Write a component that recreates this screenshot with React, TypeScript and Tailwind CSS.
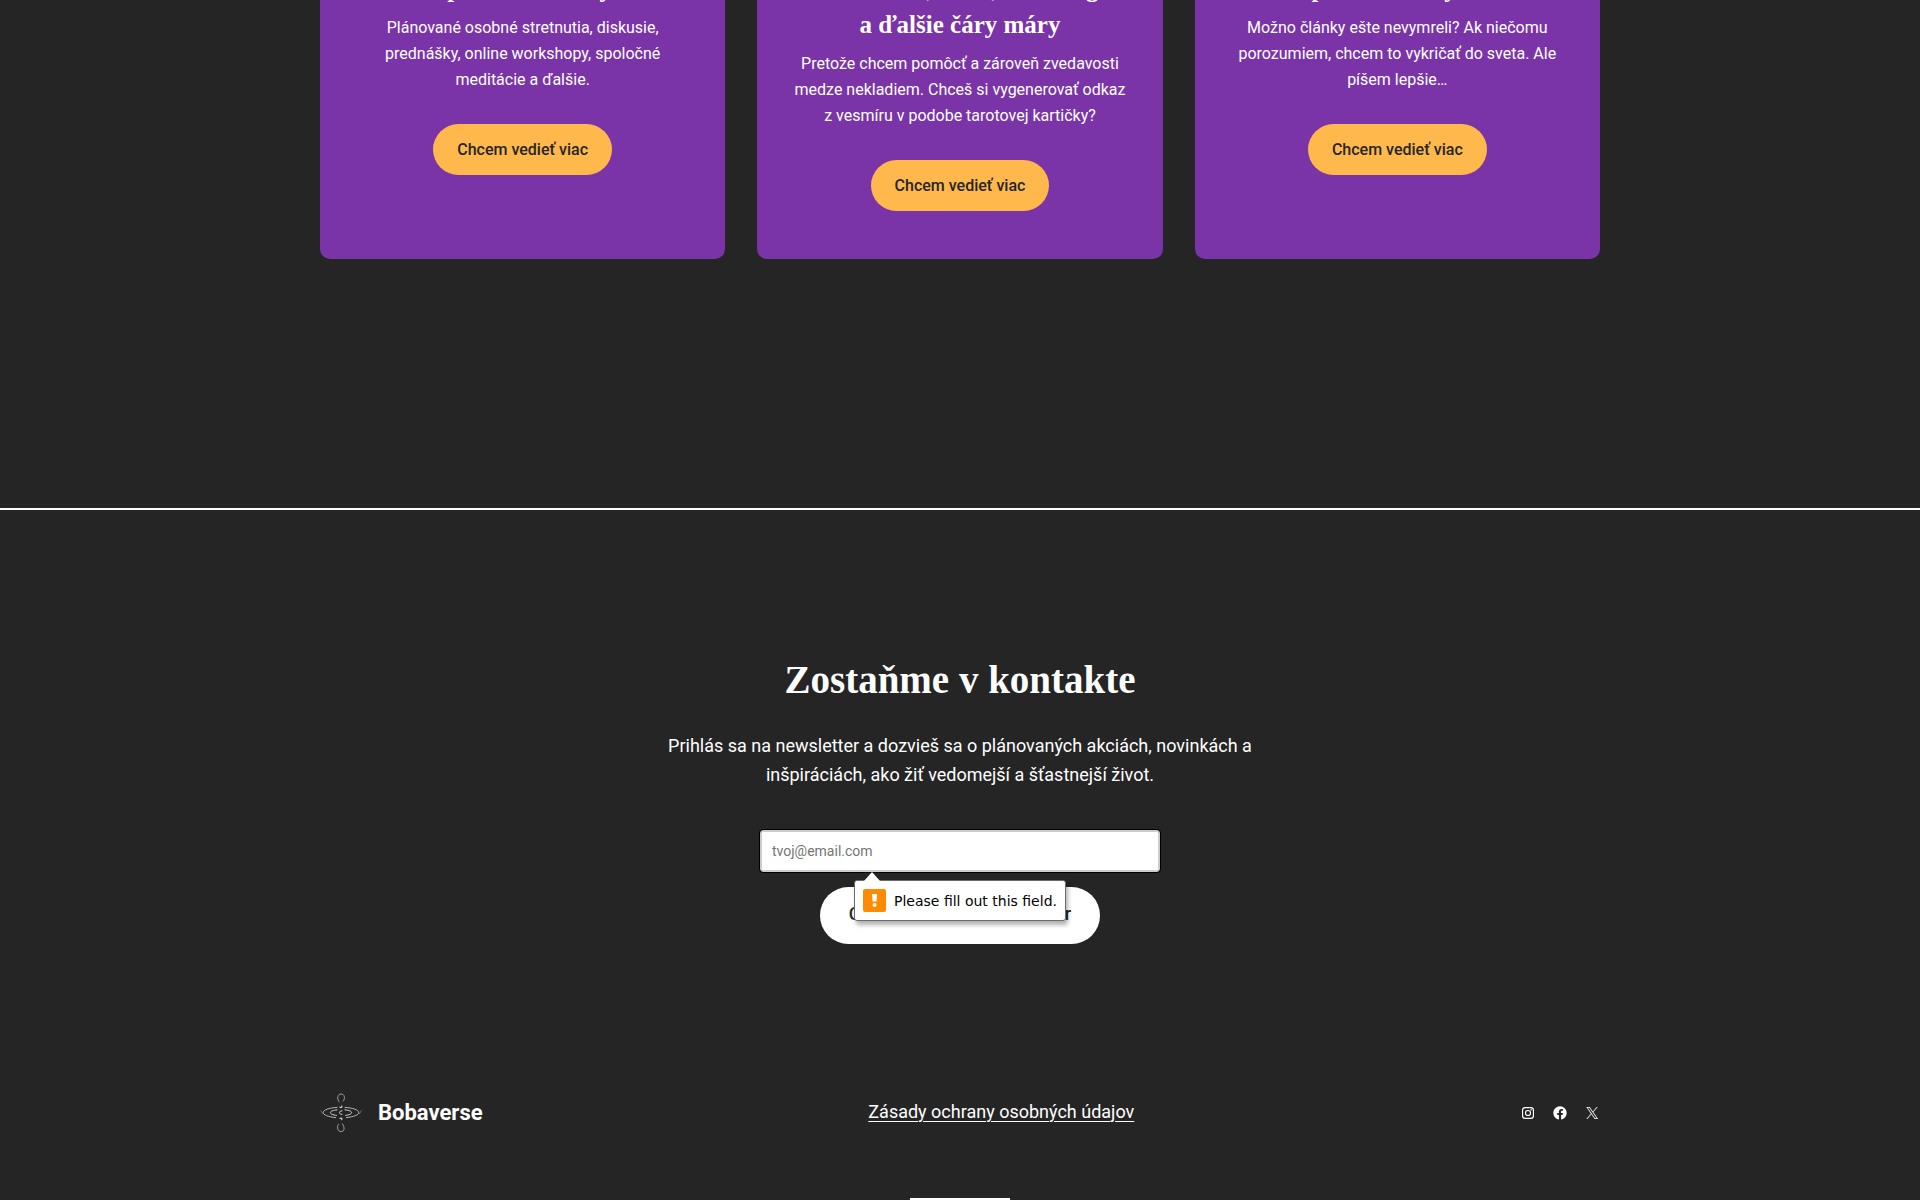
import { useState } from "react";

type Card = {
    title: string[];
    text: string;
};

const cards: Card[] = [
    {
        title: ["Spoločné zážitky"],
        text: "Plánované osobné stretnutia, diskusie, prednášky, online workshopy, spoločné meditácie a ďalšie.",
    },
    {
        title: ["Meditácie, tarot, coaching", "a ďalšie čáry máry"],
        text: "Pretože chcem pomôcť a zároveň zvedavosti medze nekladiem. Chceš si vygenerovať odkaz z\u00a0vesmíru v podobe tarotovej kartičky?",
    },
    {
        title: ["Napísané články a iné"],
        text: "Možno články ešte nevymreli? Ak niečomu porozumiem, chcem to vykričať do sveta. Ale píšem lepšie…",
    },
];

function ServiceCard({ card }: { card: Card }) {
    return (
        <article className="flex flex-col items-center rounded-[10px] bg-[#7a34a8] px-8 py-12 text-center">
            <h3 className="font-['Liberation_Serif',serif] text-[25px] leading-9 font-bold text-white">
                {card.title.map((line) => (
                    <span key={line} className="block">
                        {line}
                    </span>
                ))}
            </h3>
            <p className="mt-2 text-base leading-[26px]">{card.text}</p>
            <a
                href="#viac"
                className="mt-[31px] flex h-[51px] items-center rounded-full bg-[#ffb84c] px-6 font-medium text-[#252525]"
            >
                Chcem vedieť viac
            </a>
        </article>
    );
}

function DropLogo() {
    return (
        <svg viewBox="0 0 42 42" className="size-[42px]" fill="none" stroke="#d4d4d4" strokeLinecap="round">
            <path d="M19.2 10C16.400 6.400 17.600 2.200 21 2c3.400 0 4.600 3.600 2.400 7" strokeWidth=".9" opacity=".75" />
            <path d="M18.400 32.200c-2 3.400-.6 7.200 2.600 7.400 3.200 0 4.400-3.600 1.400-7.800" strokeWidth=".9" opacity=".75" />
            <path d="M17 15.400C9 15.800 3.200 18 3.200 20.600c0 2.200 4.800 4.200 12.400 5" strokeWidth="1" opacity=".8" />
            <path d="M25 15.400c8 .4 13.800 2.600 13.800 5.200 0 2.200-4.800 4.200-12.400 5" strokeWidth="1" opacity=".8" />
            <path d="M17 17.800c-3.800.4-6.600 1.400-6.600 2.800s2.600 2.400 6 2.800" strokeWidth="1" />
            <path d="M25 17.800c3.800.4 6.600 1.400 6.600 2.800s-2.600 2.400-6 2.800" strokeWidth="1" />
            <path d="M22 18.800c-1.800 0-2.400.8-2.400 1.800s.8 1.800 2.400 1.800" />
            <path d="M.8 18.800l1.800 2.600M39.600 21.600l1.600-2.800" strokeWidth=".8" opacity=".5" />
            <path d="M20 15.200c1.200.8 2.200 0 1.800-1.200M20 26.400c1.200-.8 2.200 0 1.800 1.200" strokeWidth="1.200" />
        </svg>
    );
}

function InstagramIcon() {
    return (
        <svg viewBox="0 0 24 24" className="size-4" fill="none" stroke="currentColor" strokeWidth="1.7">
            <rect x="3.850" y="3.850" width="16.300" height="16.300" rx="4" />
            <circle cx="12" cy="12" r="3.800" />
            <circle cx="16.800" cy="7.200" r="1.100" fill="currentColor" stroke="none" />
        </svg>
    );
}

function FacebookIcon() {
    return (
        <svg viewBox="0 0 24 24" className="size-4" fill="currentColor">
            <path d="M12 2C6.5 2 2 6.5 2 12c0 5 3.7 9.1 8.4 9.9v-7H7.9V12h2.5V9.8c0-2.5 1.5-3.9 3.8-3.9 1.1 0 2.2.2 2.2.2v2.5h-1.3c-1.2 0-1.6.8-1.6 1.6V12h2.8l-.4 2.9h-2.3v7C18.3 21.1 22 17 22 12c0-5.5-4.5-10-10-10z" />
        </svg>
    );
}

function XIcon() {
    return (
        <svg viewBox="0 0 24 24" className="size-4" fill="currentColor">
            <path d="M13.982 10.622 20.54 3h-1.554l-5.693 6.618L8.745 3H3.5l6.876 10.007L3.5 21h1.554l6.012-6.989L15.868 21h5.245l-7.131-10.378Zm-2.128 2.474-.697-.997-5.543-7.93H8l4.474 6.4.697.996 5.815 8.318h-2.387l-4.745-6.787Z" />
        </svg>
    );
}

function RequiredHint() {
    return (
        <div
            role="alert"
            className="absolute top-[50px] left-[94px] z-10 flex h-[41px] items-center gap-2 rounded-[3px] border border-[#6b6b6b] bg-white px-2 font-['DejaVu_Sans',sans-serif] text-sm whitespace-nowrap text-black shadow-[2px_4px_4px_rgba(0,0,0,0.3)]"
        >
            <svg viewBox="0 0 16 9" className="absolute -top-[9px] left-[9px] h-[9px] w-4" fill="#fff">
                <path d="M0 9 8 0l8 9z" />
            </svg>
            <svg viewBox="0 0 23 23" className="size-[23px]">
                <rect width="23" height="23" rx="2" fill="#ff8c00" />
                <path d="M9 5h5l-.5 7.500h-4z" fill="#fff" />
                <circle cx="11.500" cy="16" r="2" fill="#fff" />
            </svg>
            Please fill out this field.
        </div>
    );
}

export default function App() {
    const [email, setEmail] = useState("");

    return (
        <div className="flex h-screen flex-col overflow-hidden bg-[#252525] font-[Roboto,sans-serif] text-white">
            {/* page is scrolled down, the top of the cards is cut off */}
            <main className="-mt-[77px] shrink-0">
                <section className="mx-auto grid max-w-[1280px] grid-cols-3 gap-8">
                    {cards.map((card) => (
                        <ServiceCard key={card.title[0]} card={card} />
                    ))}
                </section>

                <hr className="mt-[249px] border-t-2 border-white" />

                <section className="mx-auto flex max-w-[640px] flex-col items-center pt-[146px] text-center">
                    <h2 className="font-['Liberation_Serif',serif] text-[39px] leading-[48px] font-bold">
                        Zostaňme v kontakte
                    </h2>
                    <p className="mt-[27px] text-lg leading-[29px]">
                        Prihlás sa na newsletter a dozvieš sa o plánovaných akciách, novinkách a
                        inšpiráciách, ako žiť vedomejší a šťastnejší život.
                    </p>
                    <form
                        className="mt-[41px] flex w-full flex-col items-center gap-[15px]"
                        onSubmit={(e) => e.preventDefault()}
                    >
                        <div className="relative w-full max-w-[400px]">
                            <input
                                type="email"
                                aria-label="E-mail"
                                required
                                value={email}
                                onChange={(e) => setEmail(e.target.value)}
                                placeholder="tvoj@email.com"
                                className="block h-[42px] w-full rounded-[3px] border-2 border-[#ccc] bg-white px-2.5 text-sm text-black outline-1 outline-black placeholder:text-[#757575]"
                            />
                            {email === "" && <RequiredHint />}
                        </div>
                        <button
                            type="submit"
                            className="h-[57px] rounded-full bg-white px-[29px] pb-1 text-lg font-medium text-[#252525]"
                        >
                            Chcem odoberať newsletter
                        </button>
                    </form>
                </section>
            </main>

            <footer className="mx-auto mt-[148px] flex w-full max-w-[1280px] shrink-0 items-center justify-between">
                <a href="#domov" className="flex items-center gap-4 text-[22px] leading-7 font-bold">
                    <DropLogo />
                    Bobaverse
                </a>
                <a
                    href="#zasady"
                    className="pb-1 text-lg leading-[29px] underline decoration-1 underline-offset-3"
                >
                    Zásady ochrany osobných údajov
                </a>
                <nav className="flex gap-4">
                    <a href="#instagram" aria-label="Instagram">
                        <InstagramIcon />
                    </a>
                    <a href="#facebook" aria-label="Facebook">
                        <FacebookIcon />
                    </a>
                    <a href="#x" aria-label="X">
                        <XIcon />
                    </a>
                </nav>
            </footer>

            <div className="mx-auto mt-16 h-10 w-[100px] shrink-0 bg-white" />
        </div>
    );
}
